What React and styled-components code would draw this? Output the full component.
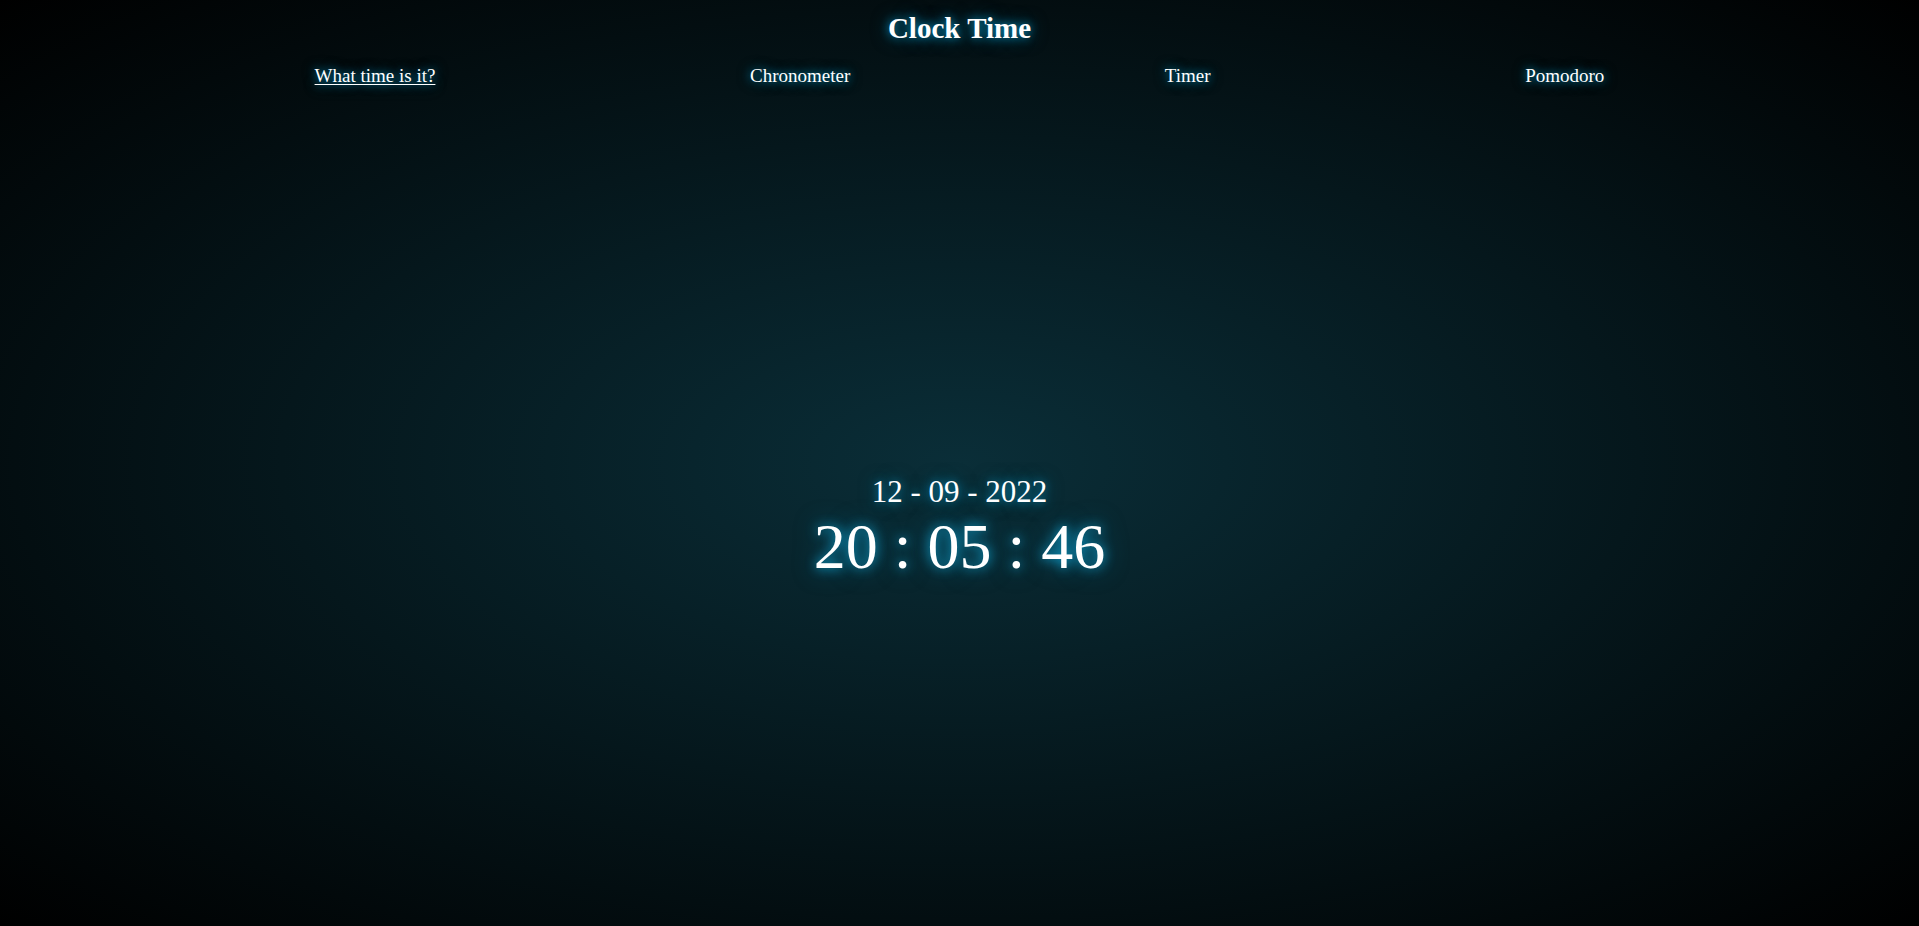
import React from 'react';
import styled, { createGlobalStyle } from 'styled-components';

const Global = createGlobalStyle`
    html, body {
        margin: 0;
        padding: 0;
        height: 100%;
    }
    body {
        font-family: "Liberation Serif", "Times New Roman", serif;
        color: #ffffff;
        background: #000;
    }
`;

const Page = styled.div`
    min-height: 100vh;
    display: flex;
    flex-direction: column;
    background: radial-gradient(ellipse at center, #0a2e38 0%, #000000 100%);
`;

const Header = styled.header`
    padding-top: 12px;
    display: flex;
    flex-direction: column;
    align-items: center;
`;

const Title = styled.h1`
    margin: 0;
    font-size: 29px;
    font-weight: bold;
    text-shadow: 0 0 10px rgba(10, 160, 210, 0.9), 0 0 18px rgba(7, 106, 140, 0.7);
`;

const Nav = styled.nav`
    width: 100%;
    margin-top: 20px;
    display: flex;
    justify-content: space-evenly;
`;

const NavLink = styled.a`
    font-size: 19px;
    color: #ffffff;
    text-decoration: ${(p) => (p.$active ? 'underline' : 'none')};
    text-underline-offset: 2px;
    cursor: pointer;
    text-shadow: 0 0 8px rgba(10, 160, 210, 0.85), 0 0 14px rgba(7, 106, 140, 0.6);
`;

const Main = styled.main`
    flex: 1;
    display: flex;
    flex-direction: column;
    align-items: center;
    justify-content: center;
    padding-top: 44px;
`;

const DateText = styled.div`
    font-size: 31px;
    text-shadow: 0 0 10px rgba(10, 160, 210, 0.85), 0 0 18px rgba(7, 106, 140, 0.6);
`;

const TimeText = styled.div`
    font-size: 64px;
    text-shadow: 0 0 12px rgba(18, 181, 232, 0.9), 0 0 24px rgba(10, 127, 168, 0.7);
`;

const links = ['What time is it?', 'Chronometer', 'Timer', 'Pomodoro'];

const App = () => {
    return (
        <Page>
            <Global />
            <Header>
                <Title>Clock Time</Title>
                <Nav>
                    {links.map((item, idx) => (
                        <NavLink key={`nav-${idx}`} $active={idx === 0}>
                            {item}
                        </NavLink>
                    ))}
                </Nav>
            </Header>
            <Main>
                <DateText>12 - 09 - 2022</DateText>
                <TimeText>20 : 05 : 46</TimeText>
            </Main>
        </Page>
    );
};

export default App;
